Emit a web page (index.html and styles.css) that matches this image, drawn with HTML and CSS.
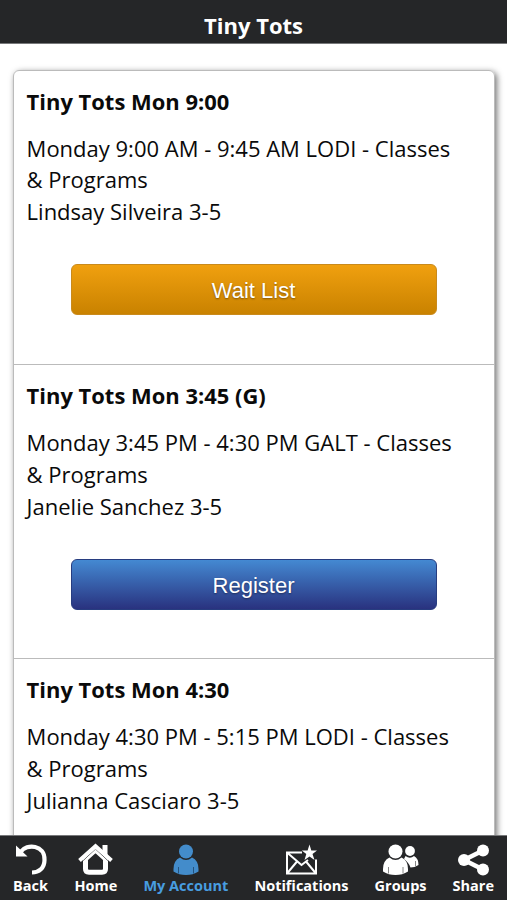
FILE: index.html
```html
<!DOCTYPE html>
<html lang="en">
<head>
<meta charset="utf-8">
<title>Tiny Tots</title>
<link rel="stylesheet" href="styles.css">
</head>
<body>
<header class="topbar"><h1>Tiny Tots</h1></header>
<main class="content">
  <div class="card">
    <section class="entry">
      <h2>Tiny Tots Mon 9:00</h2>
      <p>Monday 9:00 AM - 9:45 AM LODI - Classes<br>&amp; Programs<br>Lindsay Silveira 3-5</p>
      <button class="btn wait">Wait List</button>
    </section>
    <section class="entry">
      <h2>Tiny Tots Mon 3:45 (G)</h2>
      <p>Monday 3:45 PM - 4:30 PM GALT - Classes<br>&amp; Programs<br>Janelie Sanchez 3-5</p>
      <button class="btn register">Register</button>
    </section>
    <section class="entry">
      <h2>Tiny Tots Mon 4:30</h2>
      <p>Monday 4:30 PM - 5:15 PM LODI - Classes<br>&amp; Programs<br>Julianna Casciaro 3-5</p>
    </section>
  </div>
</main>
<nav class="tabs">
  <a class="tab back"><svg width="36" height="33" viewBox="0 0 36 33"><path d="M7.500 9C14 0 32 2 31.500 17C31.500 25 26 29.500 19 29.500" fill="none" stroke="#fff" stroke-width="4.200"/><path d="M3 2.500V13.500H14.500Z" fill="#fff"/></svg><span>Back</span></a>
  <a class="tab home"><svg width="36" height="33" viewBox="0 0 36 33"><path d="M24.500 2H29.500V15L24.500 10Z" fill="#fff"/><path d="M7.500 16L17.500 7L27.500 16V26Q27.500 29.200 24 29.200H11Q7.500 29.200 7.500 26Z" fill="none" stroke="#fff" stroke-width="5"/><path d="M3 19.500L17.500 6L32 19.500" fill="none" stroke="#252628" stroke-width=".8"/><path d="M1.500 17.500L17.500 3.200L33.500 17.500" fill="none" stroke="#fff" stroke-width="4"/></svg><span>Home</span></a>
  <a class="tab account"><svg width="36" height="33" viewBox="0 0 36 33"><circle cx="18" cy="8.500" r="7" fill="#438ccb"/><path d="M12 14.500Q18 19.500 24 14.500Q30.500 17.500 30.500 26V28.500Q25 32 18 32Q11 32 5.500 28.500V26Q5.500 17.500 12 14.500Z" fill="#438ccb"/><path d="M10.500 24V30.500M25.500 24V30.500" stroke="#25537e"/></svg><span>My Account</span></a>
  <a class="tab notify"><svg width="36" height="33" viewBox="0 0 36 33"><path d="M19 9.500H4V30.500H33V16.500M4 9.500L18.500 22L25 17M4 30.500L14 18.500M33 30.500L23 18.500" fill="none" stroke="#fff" stroke-width="2"/><path d="M26.500 1.500L28.300 7.500H34L29.500 11L31.500 17L26.500 13.500L21.500 17L23.300 11L18.800 7.500H24.600Z" fill="#fff"/></svg><span>Notifications</span></a>
  <a class="tab groups"><svg width="36" height="33" viewBox="0 0 36 33"><circle cx="27" cy="8" r="4.900" fill="#fff"/><path d="M22.500 13Q27 16.500 31 13Q35.500 15.500 35.500 22Q31.500 24.500 27.500 24.500Q25.500 19 21 16Z" fill="#fff"/><circle cx="12.500" cy="8.500" r="7" fill="#fff"/><path d="M6.500 14.500Q12.500 19.500 18.500 14.500Q25 17.500 25 26V28.500Q19.500 32 12.500 32Q5.500 32 0 28.500V26Q0 17.500 6.500 14.500Z" fill="#fff"/><path d="M5.500 24V30.500M20 24V30.500M32.500 18V23" stroke="#888"/></svg><span>Groups</span></a>
  <a class="tab share"><svg width="36" height="33" viewBox="0 0 36 33"><path d="M28 7.500L9 17L28 26.500" fill="none" stroke="#fff" stroke-width="4.500"/><circle cx="28" cy="7.500" r="6" fill="#fff"/><circle cx="9" cy="17" r="6" fill="#fff"/><circle cx="28" cy="26.500" r="6" fill="#fff"/></svg><span>Share</span></a>
</nav>
</body>
</html>
```
FILE: styles.css
```css
* { box-sizing: border-box; }
body {
  margin: 0;
  height: 900px;
  display: flex;
  flex-direction: column;
  overflow: hidden;
  background: #fff;
  color: #0a0a0a;
  font-family: "Open Sans", sans-serif;
}
h1, h2, p { margin: 0; }
.topbar {
  flex: none;
  height: 44px;
  padding-top: 9px;
  background: #252628;
  border-bottom: 1px solid #77787a;
  text-align: center;
}
h1 { font-size: 22px; line-height: 32px; color: #fff; }
.content {
  flex: 1;
  min-height: 0;
  overflow: hidden;
  padding: 25.5px 12.5px 0 13px;
}
.card {
  height: 900px;
  border: 1px solid #bbb;
  border-radius: 6px;
  box-shadow: 2px 2px 6px rgba(0, 0, 0, .55);
}
.entry {
  height: 294.4px;
  padding: 15.1px 13px 0 12.6px;
  border-bottom: 1px solid #bbb;
}
h2 { font-size: 21.95px; line-height: 32px; }
p { margin-top: 15px; font-size: 22px; line-height: 31.8px; white-space: nowrap; }
.btn {
  display: block;
  width: 366px;
  height: 51px;
  margin: 36.3px auto 0;
  padding: 3px 0 0;
  border-radius: 6px;
  color: #fff;
  font: 22px "Liberation Sans", sans-serif;
  text-shadow: 0 1px 2px rgba(0, 0, 0, .4);
}
.wait { border: 1px solid #c98a1c; background: linear-gradient(#f0a00f, #c98200); }
.register { border: 1px solid #273d80; background: linear-gradient(#4489d2, #29327f); }
.tabs {
  flex: none;
  height: 65px;
  display: flex;
  justify-content: space-between;
  padding: 7px 13px 0 12.5px;
  background: #252628;
  border-top: 1px solid #77787a;
  color: #fff;
  font-size: 14.5px;
  font-weight: 700;
  line-height: 20px;
}
.tab { display: flex; flex-direction: column; align-items: center; }
.tab svg { flex: none; }
.account { color: #489de0; }
```
